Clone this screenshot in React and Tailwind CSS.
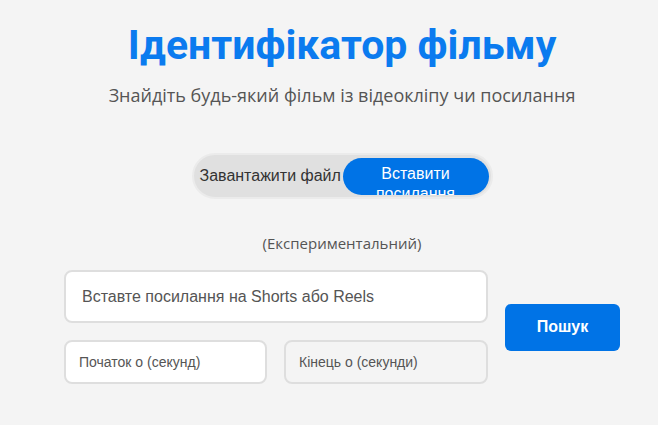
export default function App() {
  return (
    <div className="min-h-[425px] w-full bg-[#f4f4f4] pl-[26px]">
      <div className="flex flex-col items-center pt-[18px]">
        <h1 className="font-['Roboto',sans-serif] text-[41px] font-bold leading-[54px] text-[#0b7bef]">
          Ідентифікатор фільму
        </h1>
        <p className="mt-[11px] font-['Open_Sans',sans-serif] text-[18px] leading-[24px] text-[#555]">
          Знайдіть будь-який фільм із відеокліпу чи посилання
        </p>

        <div className="mt-[46px] flex h-[46px] w-[301px] items-center rounded-full border-2 border-[#ebebeb] bg-[#e0e0e0] pr-[2px]">
          <span className="flex-1 pl-[6px] font-['Liberation_Sans',Arial,sans-serif] text-[16px] text-[#333]">
            Завантажити файл
          </span>
          <button className="h-[37px] w-[146px] overflow-hidden rounded-full bg-[#0073e6] pt-[6px] text-center font-['Liberation_Sans',Arial,sans-serif] text-[16px] leading-[20px] text-white">
            Вставити посилання
          </button>
        </div>

        <p className="mt-[34px] font-['Open_Sans',sans-serif] text-[15px] leading-[20px] text-[#555]">
          (Експериментальний)
        </p>

        <div className="mt-[17px] flex items-center gap-[17px]">
          <div className="flex w-[424px] flex-col gap-[17px]">
            <input
              className="h-[53px] w-full rounded-[8px] border-2 border-[#dedede] bg-white px-[16px] font-['Liberation_Sans',Arial,sans-serif] text-[16px] text-[#333] outline-none placeholder:text-[#555]"
              placeholder="Вставте посилання на Shorts або Reels"
            />
            <div className="flex gap-[17px]">
              <input
                className="h-[44px] w-[203px] rounded-[8px] border-2 border-[#dedede] bg-white px-[13px] font-['Liberation_Sans',Arial,sans-serif] text-[14px] text-[#333] outline-none placeholder:text-[#555]"
                placeholder="Початок о (секунд)"
              />
              <input
                className="h-[44px] w-[204px] rounded-[8px] border-2 border-[#dedede] bg-[#f4f4f4] px-[13px] font-['Liberation_Sans',Arial,sans-serif] text-[14px] text-[#333] outline-none placeholder:text-[#555]"
                placeholder="Кінець о (секунди)"
              />
            </div>
          </div>
          <button className="h-[47px] w-[115px] rounded-[6px] bg-[#0073e6] font-['Liberation_Sans',Arial,sans-serif] text-[16px] font-bold text-white">
            Пошук
          </button>
        </div>
      </div>
    </div>
  );
}
